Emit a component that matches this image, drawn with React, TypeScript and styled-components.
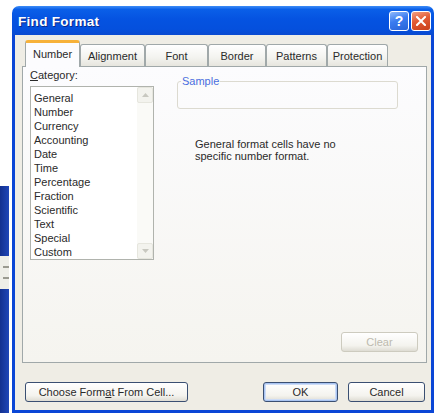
import { createGlobalStyle, styled, css } from 'styled-components'

const GlobalStyle = createGlobalStyle`
  html, body {
    margin: 0;
    padding: 0;
    background: #ffffff;
  }
  body {
    width: 438px;
    height: 413px;
    overflow: hidden;
    font-family: 'Liberation Sans', Arial, sans-serif;
    font-size: 11px;
    color: #2a2a2a;
  }
`

const Page = styled.div`
  display: flex;
  align-items: flex-start;
  height: 413px;
`

// strip of another window peeking out at the left
const Desktop = styled.div`
  width: 12px;
  height: 413px;
  display: flex;
  flex-direction: column;
  padding-top: 186px;
  box-sizing: border-box;
`
const DesktopBlock = styled.div<{ $h?: number; $light?: boolean }>`
  width: 9px;
  ${({ $h }) => ($h ? css`height: ${$h}px;` : css`flex: 1;`)}
  background: ${({ $light }) => ($light ? '#eeeee8' : 'linear-gradient(90deg, #13308f, #1f46b8)')};
  display: flex;
  flex-direction: column;
  justify-content: center;
  gap: 9px;
`
const DesktopMark = styled.div`
  height: 2px;
  width: 6px;
  margin-left: 3px;
  background: #9a9a90;
`

const Window = styled.div`
  margin-top: 6px;
  width: 422px;
  height: 407px;
  display: flex;
  flex-direction: column;
`

const TitleBar = styled.div`
  height: 29px;
  flex: none;
  border-radius: 7px 7px 0 0;
  background: linear-gradient(180deg, #3d8cf7 0%, #0a5fe8 12%, #0553e1 45%, #0550dd 80%, #0a4ad0 100%);
  display: flex;
  align-items: center;
  padding: 0 3px 0 6px;
`
const Title = styled.div`
  flex: 1;
  color: #ffffff;
  font-weight: bold;
  font-size: 13.5px;
  letter-spacing: 0.3px;
  text-shadow: 1px 1px 0 #0a2a8c;
  padding-top: 2px;
`
const CaptionButton = styled.div<{ $close?: boolean }>`
  width: 20px;
  height: 20px;
  margin-left: 2px;
  box-sizing: border-box;
  border: 1px solid #ffffff;
  border-radius: 3px;
  display: flex;
  align-items: center;
  justify-content: center;
  color: #ffffff;
  font-weight: bold;
  font-size: 14px;
  background: ${({ $close }) =>
    $close
      ? 'linear-gradient(160deg, #f2a184 0%, #e25a34 45%, #c9401b 100%)'
      : 'linear-gradient(160deg, #8fb9fb 0%, #3a7cf0 45%, #2863d8 100%)'};
`

const Body = styled.div`
  flex: 1;
  display: flex;
  flex-direction: column;
  background: #efede5;
  border: 3px solid #0a46d6;
  border-top: none;
  padding: 6px 4px 0 7px;
`

const TabStrip = styled.div`
  display: flex;
  align-items: flex-end;
  height: 25px;
  padding-left: 3px;
`
const Tab = styled.div<{ $w: number; $active?: boolean }>`
  width: ${({ $w }) => $w}px;
  box-sizing: border-box;
  display: flex;
  align-items: center;
  justify-content: center;
  border: 1px solid #a0a8a9;
  border-bottom: none;
  border-radius: 3px 3px 0 0;
  font-size: 11px;
  ${({ $active }) =>
    $active
      ? css`
          height: 27px;
          margin-bottom: -1px;
          position: relative;
          z-index: 1;
          border-top: 3px solid #f7b23a;
          background: #fcfcfe;
          padding-bottom: 2px;
        `
      : css`
          height: 22px;
          background: linear-gradient(180deg, #ffffff 0%, #f3f3ef 60%, #e6e5de 100%);
          padding-top: 1px;
        `}
`

const Panel = styled.div`
  height: 297px;
  box-sizing: border-box;
  border: 1px solid #a0a8a9;
  background: linear-gradient(180deg, #fcfcfe 0%, #f5f4ef 100%);
  display: flex;
  flex-direction: column;
  padding: 1px 8px 10px 7px;
`
const PanelTop = styled.div`
  display: flex;
  gap: 23px;
`
const CategoryColumn = styled.div`
  display: flex;
  flex-direction: column;
`
const Label = styled.div`
  height: 14px;
  line-height: 14px;
  margin-bottom: 4px;
`
const ListBox = styled.div`
  width: 124px;
  height: 174px;
  box-sizing: border-box;
  border: 1px solid #b0b3ad;
  background: #ffffff;
  display: flex;
`
const ListItems = styled.div`
  flex: 1;
  padding: 4px 0 0 3px;
`
const ListItem = styled.div`
  height: 14px;
  line-height: 14px;
`
const ScrollBar = styled.div`
  width: 16px;
  display: flex;
  flex-direction: column;
  justify-content: space-between;
  background: #fafaf7;
`
const ScrollArrow = styled.div`
  height: 16px;
  box-sizing: border-box;
  border: 1px solid #e6e6de;
  border-radius: 2px;
  background: #f3f3ee;
  display: flex;
  align-items: center;
  justify-content: center;
`

const DetailColumn = styled.div`
  flex: 1;
  display: flex;
  flex-direction: column;
  padding: 13px 20px 0 0;
`
const SampleBox = styled.div`
  height: 28px;
  box-sizing: border-box;
  border: 1px solid #dcdad0;
  border-radius: 3px;
  position: relative;
`
const SampleLegend = styled.span`
  position: absolute;
  left: 3px;
  top: -7px;
  padding: 0 1px;
  line-height: 13px;
  color: #4a6ee0;
  background: #fbfbfa;
`
const Description = styled.div`
  margin: 29px 0 0 18px;
  line-height: 12px;
`

const PanelBottom = styled.div`
  margin-top: auto;
  display: flex;
  justify-content: flex-end;
`

const Button = styled.div<{ $w: number; $default?: boolean; $disabled?: boolean }>`
  width: ${({ $w }) => $w}px;
  height: 20px;
  box-sizing: border-box;
  border: 1px solid ${({ $disabled }) => ($disabled ? '#cdcbbf' : '#3a4f72')};
  border-radius: 3px;
  background: linear-gradient(180deg, #ffffff 0%, #f4f3ee 70%, #dedcd3 100%);
  display: flex;
  align-items: center;
  justify-content: center;
  color: ${({ $disabled }) => ($disabled ? '#bdbaae' : '#2a2a2a')};
  ${({ $default }) =>
    $default &&
    css`
      box-shadow: inset 0 0 0 1px #a8c4f2, inset 0 0 0 2px #cddcf6;
    `}
`

const Footer = styled.div`
  display: flex;
  align-items: center;
  padding: 19px 2px 0 3px;
`
const FooterSpacer = styled.div`
  flex: 1;
`
const FooterGap = styled.div`
  width: 10px;
`

const tabs = [
  { label: 'Number', w: 55 },
  { label: 'Alignment', w: 65 },
  { label: 'Font', w: 63 },
  { label: 'Border', w: 58 },
  { label: 'Patterns', w: 61 },
  { label: 'Protection', w: 61 },
]

const categories = [
  'General',
  'Number',
  'Currency',
  'Accounting',
  'Date',
  'Time',
  'Percentage',
  'Fraction',
  'Scientific',
  'Text',
  'Special',
  'Custom',
]

const Arrow = ({ up }: { up?: boolean }) => (
  <svg width="7" height="4" viewBox="0 0 7 4">
    <path d={up ? 'M0 4 L3.5 0 L7 4 Z' : 'M0 0 L3.5 4 L7 0 Z'} fill="#c8c8c0" />
  </svg>
)

export default function App() {
  return (
    <>
      <GlobalStyle />
      <Page>
        <Desktop>
          <DesktopBlock $h={70} />
          <DesktopBlock $h={33} $light>
            <DesktopMark />
            <DesktopMark />
          </DesktopBlock>
          <DesktopBlock />
        </Desktop>
        <Window>
          <TitleBar>
            <Title>Find Format</Title>
            <CaptionButton>?</CaptionButton>
            <CaptionButton $close>
              <svg width="10" height="10" viewBox="0 0 10 10">
                <path d="M1 1 L9 9 M9 1 L1 9" stroke="#ffffff" strokeWidth="2" strokeLinecap="square" />
              </svg>
            </CaptionButton>
          </TitleBar>
          <Body>
            <TabStrip>
              {tabs.map((t, i) => (
                <Tab key={t.label} $w={t.w} $active={i === 0}>
                  {t.label}
                </Tab>
              ))}
            </TabStrip>
            <Panel>
              <PanelTop>
                <CategoryColumn>
                  <Label>
                    <u>C</u>ategory:
                  </Label>
                  <ListBox>
                    <ListItems>
                      {categories.map((c) => (
                        <ListItem key={c}>{c}</ListItem>
                      ))}
                    </ListItems>
                    <ScrollBar>
                      <ScrollArrow>
                        <Arrow up />
                      </ScrollArrow>
                      <ScrollArrow>
                        <Arrow />
                      </ScrollArrow>
                    </ScrollBar>
                  </ListBox>
                </CategoryColumn>
                <DetailColumn>
                  <SampleBox>
                    <SampleLegend>Sample</SampleLegend>
                  </SampleBox>
                  <Description>
                    General format cells have no
                    <br />
                    specific number format.
                  </Description>
                </DetailColumn>
              </PanelTop>
              <PanelBottom>
                <Button $w={77} $disabled>
                  Clear
                </Button>
              </PanelBottom>
            </Panel>
            <Footer>
              <Button $w={163}>
                Choose Form<u>a</u>t From Cell...
              </Button>
              <FooterSpacer />
              <Button $w={75} $default>
                OK
              </Button>
              <FooterGap />
              <Button $w={77}>Cancel</Button>
            </Footer>
          </Body>
        </Window>
      </Page>
    </>
  )
}
